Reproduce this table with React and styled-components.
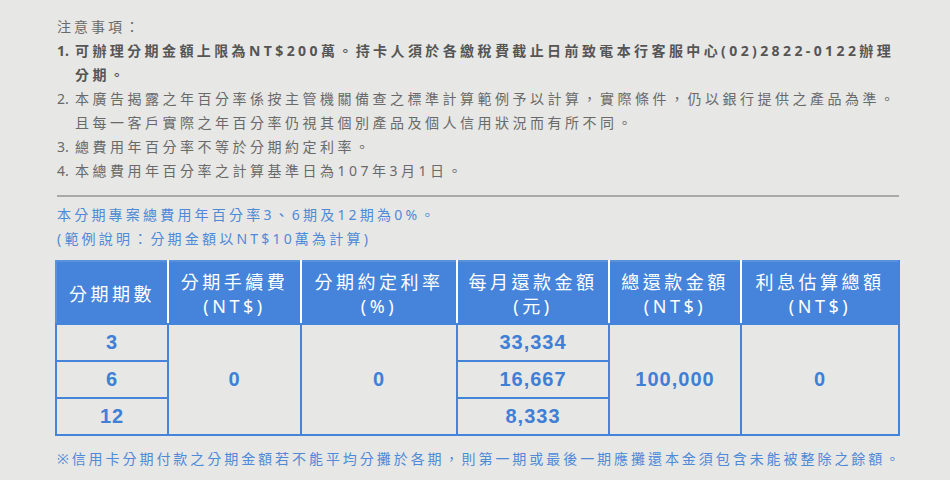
import React from 'react';
import styled, { createGlobalStyle } from 'styled-components';

const GlobalStyle = createGlobalStyle`
  body {
    margin: 0;
    background: #e7e7e5;
    font-family: "Noto Sans", "Noto Sans CJK TC", sans-serif;
  }
`;

const Page = styled.div`
  width: 845px;
  padding: 15px 0 0 55px;
`;

const Notes = styled.ol`
  list-style: none;
  margin: 0;
  padding: 0 0 0 2px;
  color: #6a6a6a;
  font-size: 14px;
  line-height: 24px;
  letter-spacing: 3.5px;
  white-space: nowrap;
`;

const Title = styled.li`
  margin: 0;
  letter-spacing: 3px;
`;

const Item = styled.li`
  display: flex;
  font-weight: ${p => (p.bold ? 700 : 400)};
  color: ${p => (p.bold ? '#555' : '#6a6a6a')};
  letter-spacing: ${p => (p.bold ? '3.4px' : '3.5px')};
`;

const Num = styled.span`
  flex: none;
  width: 18px;
  letter-spacing: 0;
  &::after {
    content: '.';
  }
`;

const Divider = styled.hr`
  margin: 12px 0 6px 2px;
  border: none;
  height: 2px;
  background: #a9a9a8;
  width: 842px;
`;

const Promo = styled.div`
  padding-left: 2px;
  color: #4f8ad8;
  font-size: 14px;
  line-height: 24px;
  letter-spacing: 3.2px;
`;

const Table = styled.table`
  margin-top: 9px;
  width: 845px;
  table-layout: fixed;
  border-collapse: collapse;
  border: 2px solid #5a91dc;
`;

const Th = styled.th`
  width: ${p => (p.w ? `${p.w}px` : 'auto')};
  height: 58px;
  padding: 3px 0 0;
  background: #4584da;
  color: #fff;
  font-weight: 400;
  font-size: 18px;
  line-height: 24px;
  letter-spacing: 3.5px;
  border-right: 2px solid ${p => (p.last ? '#4584da' : '#fff')};
  border-bottom: 2px solid #4584da;
`;

const Td = styled.td`
  height: 35px;
  padding: 0;
  text-align: center;
  color: #3f7fd6;
  font-family: "Liberation Sans", "Noto Sans", sans-serif;
  font-weight: 700;
  font-size: 20px;
  letter-spacing: 1px;
  border: 2px solid #4584da;
`;

const Footnote = styled.div`
  margin-top: 11px;
  padding-left: 2px;
  color: #4f8ad8;
  font-size: 14px;
  line-height: 24px;
  letter-spacing: 2.95px;
  white-space: nowrap;
`;

const heads = [
  { w: 110, lines: ['分期期數'] },
  { w: 131, lines: ['分期手續費', '(NT$)'] },
  { w: 154, lines: ['分期約定利率', '(%)'] },
  { w: 150, lines: ['每月還款金額', '(元)'] },
  { w: 130, lines: ['總還款金額', '(NT$)'] },
  { w: 0, lines: ['利息估算總額', '(NT$)'] },
];

const rows = [
  { term: '3', monthly: '33,334' },
  { term: '6', monthly: '16,667' },
  { term: '12', monthly: '8,333' },
];

export default function App() {
  return (
    <>
      <GlobalStyle />
      <Page>
        <Notes>
          <Title>注意事項：</Title>
          <Item bold>
            <Num>1</Num>
            <span>
              可辦理分期金額上限為NT$200萬。持卡人須於各繳稅費截止日前致電本行客服中心(02)2822-0122辦理
              <br />
              分期。
            </span>
          </Item>
          <Item>
            <Num>2</Num>
            <span>
              本廣告揭露之年百分率係按主管機關備查之標準計算範例予以計算，實際條件，仍以銀行提供之產品為準。
              <br />
              且每一客戶實際之年百分率仍視其個別產品及個人信用狀況而有所不同。
            </span>
          </Item>
          <Item>
            <Num>3</Num>
            <span>總費用年百分率不等於分期約定利率。</span>
          </Item>
          <Item>
            <Num>4</Num>
            <span>本總費用年百分率之計算基準日為107年3月1日。</span>
          </Item>
        </Notes>
        <Divider />
        <Promo>
          本分期專案總費用年百分率3、6期及12期為0%。
          <br />
          (範例說明：分期金額以NT$10萬為計算)
        </Promo>
        <Table>
          <thead>
            <tr>
              {heads.map((h, i) => (
                <Th key={i} w={h.w} last={i === heads.length - 1}>
                  {h.lines.map((l, j) => (
                    <div key={j}>{l}</div>
                  ))}
                </Th>
              ))}
            </tr>
          </thead>
          <tbody>
            {rows.map((r, i) => (
              <tr key={r.term}>
                <Td>{r.term}</Td>
                {i === 0 && <Td rowSpan={3}>0</Td>}
                {i === 0 && <Td rowSpan={3}>0</Td>}
                <Td>{r.monthly}</Td>
                {i === 0 && <Td rowSpan={3}>100,000</Td>}
                {i === 0 && <Td rowSpan={3}>0</Td>}
              </tr>
            ))}
          </tbody>
        </Table>
        <Footnote>※信用卡分期付款之分期金額若不能平均分攤於各期，則第一期或最後一期應攤還本金須包含未能被整除之餘額。</Footnote>
      </Page>
    </>
  );
}
